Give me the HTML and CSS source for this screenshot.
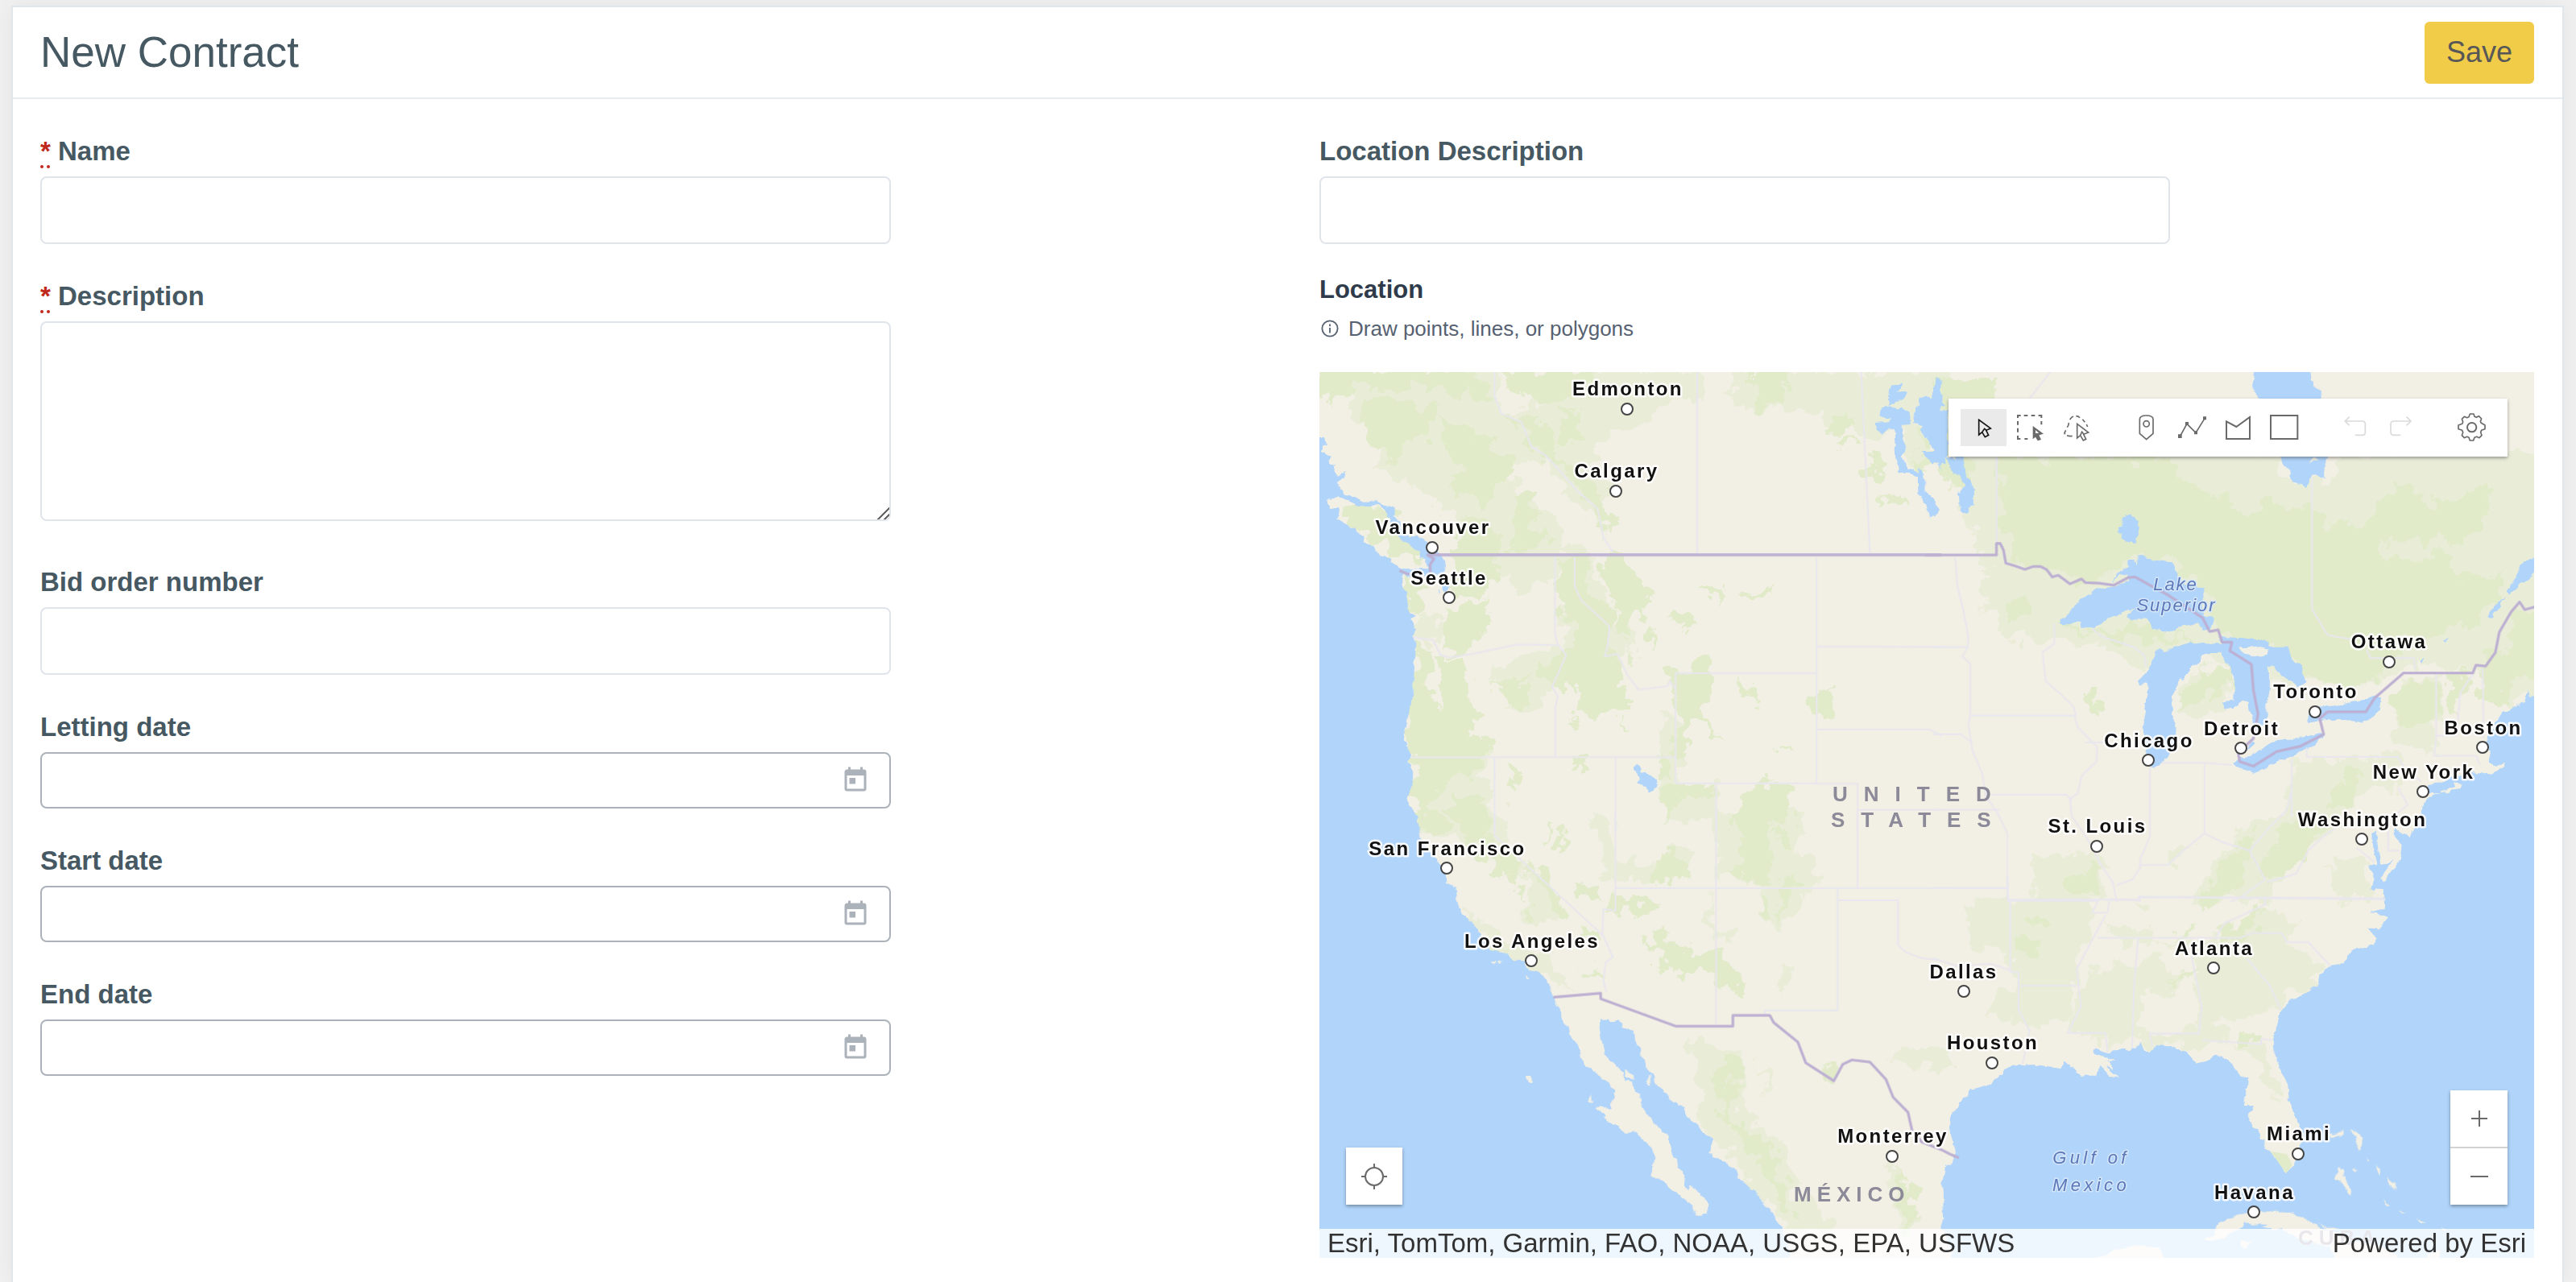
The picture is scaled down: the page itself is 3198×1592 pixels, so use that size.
FILE: index.html
```html
<!DOCTYPE html>
<html lang="en">
<head>
<meta charset="utf-8">
<title>New Contract</title>
<link rel="stylesheet" href="styles.css">
</head>
<body>
<svg class="defs" aria-hidden="true">
  <symbol id="calendar" viewBox="0 0 24 24"><path d="M19 3H18V1H16V3H8V1H6V3H5C3.890 3 3 3.900 3 5V19A2 2 0 0 0 5 21H19A2 2 0 0 0 21 19V5A2 2 0 0 0 19 3M19 19H5V8H19V19M7 10H12V15H7V10Z" fill="currentColor"/></symbol>
</svg>
<form class="card">
  <header class="card-header">
    <h1>New Contract</h1>
    <button class="save" type="submit">Save</button>
  </header>
  <div class="columns">
    <div class="column">
      <div class="field">
        <label for="name"><abbr title="required">*</abbr> Name</label>
        <input class="control" id="name" type="text">
      </div>
      <div class="field field-area">
        <label for="description"><abbr title="required">*</abbr> Description</label>
        <textarea class="control" id="description"></textarea>
      </div>
      <div class="field">
        <label for="bid">Bid order number</label>
        <input class="control" id="bid" type="text">
      </div>
      <div class="field">
        <label for="letting">Letting date</label>
        <div class="control date"><input id="letting" type="text"><button type="button" aria-label="Choose letting date"><svg><use href="#calendar"/></svg></button></div>
      </div>
      <div class="field">
        <label for="start">Start date</label>
        <div class="control date"><input id="start" type="text"><button type="button" aria-label="Choose start date"><svg><use href="#calendar"/></svg></button></div>
      </div>
      <div class="field">
        <label for="end">End date</label>
        <div class="control date"><input id="end" type="text"><button type="button" aria-label="Choose end date"><svg><use href="#calendar"/></svg></button></div>
      </div>
    </div>
    <div class="column">
      <div class="field field-location">
        <label for="location-description">Location Description</label>
        <input class="control" id="location-description" type="text">
      </div>
      <h2>Location</h2>
      <p class="hint"><svg viewBox="0 0 24 24"><circle cx="12" cy="12" r="10.500"/><path d="M12 11v7M12 6v3"/></svg>Draw points, lines, or polygons</p>
      <div class="map">
        <svg class="basemap" viewBox="0 0 1508 1100" preserveAspectRatio="xMidYMid slice">
          <defs>
            <filter id="rough" x="0" y="0" width="1508" height="1100" filterUnits="userSpaceOnUse"><feTurbulence type="fractalNoise" baseFrequency="0.045" numOctaves="4" seed="7"/><feDisplacementMap in="SourceGraphic" scale="42" xChannelSelector="R" yChannelSelector="G"/></filter>
            <filter id="shore" x="0" y="0" width="1508" height="1100" filterUnits="userSpaceOnUse"><feTurbulence type="fractalNoise" baseFrequency="0.090" numOctaves="3" seed="3"/><feDisplacementMap in="SourceGraphic" scale="7" xChannelSelector="R" yChannelSelector="G"/></filter>
          </defs>
          <rect class="land" width="1508" height="1100"/>

          <g class="wood-light" filter="url(#rough)">
            <g transform="translate(-8 -2) scale(.497 .357)">
              <path d="M0 0H460L470 150 560 180 620 300 500 320 520 440 600 470 620 620 560 700 440 720 330 480 230 380 150 330 200 230 100 160 80 60 0 60Z"/>
              <path d="M540 0H980L960 100 860 110 860 160 740 230 700 300 740 420 720 520 640 460 560 260 500 150 580 100Z"/>
              <path d="M1060 0H1600V180L1480 200 1380 230 1300 180 1200 130 1080 140 1040 60Z"/>
              <path d="M1480 200L1530 200 1560 330 1480 330Z"/>
              <path d="M480 520L700 640 760 880 800 860 790 990 620 960 620 700 500 760Z"/>
              <path d="M250 840L350 900 300 950 260 920Z M440 1050L560 960 640 980 560 1180 480 1180 510 1080 420 1090Z"/>
              <path d="M330 1240L450 1330 430 1420 480 1568H260V1330Z M870 1180L910 1240 930 1568 870 1500Z M900 1440H1010V1568H880Z"/>
            </g>
            <g transform="translate(762 98) scale(.485 .357)">
              <path d="M70 0H880L880 80 980 110 1050 0H1560V860L1440 860 1400 760 1260 740 1120 800 960 820 700 720 540 760 440 700 230 610 120 560 150 460 110 300 60 200Z"/>
              <path d="M100 420L300 420 340 600 250 680 180 620 130 520Z M620 850L700 740 770 800 740 900 660 930 620 920Z"/>
              <path d="M925 1070L1190 1060 1190 1160 1080 1200 1010 1330 900 1450 860 1568H660L780 1330 900 1260Z M1010 1420L1110 1420 1130 1568 1020 1520Z M250 1400L420 1400 440 1568H260Z M600 1370h50l-50 90z M1180 800L1300 790 1290 1060 1180 1000Z"/>
            </g>
            <g transform="translate(-8 548) scale(.497 .371)">
              <path d="M260 0H460L500 130 560 220 640 350 600 360 520 380 540 200 460 210 380 100 270 60Z M700 0H740L760 180 960 120 880 240 730 230Z M1000 0H1220L1210 120 1260 210 1190 360 1120 360 1110 230 1010 200Z"/>
              <path d="M360 290L480 430 600 500 640 600 560 530 440 470Z M1000 260L1010 380 1060 400 1030 450 980 380Z M1170 500l20 40-20 70-10-60z"/>
              <path d="M930 740L1060 790 1080 1000 1190 1120 1200 1280 1310 1360 1280 1400 1180 1400 1100 1240 1000 1080 960 960 970 860Z M1110 840l30 20 0 80z M1460 820L1500 770 1600 780V850H1460Z M1430 1170l30 20 50 200-30 10z"/>
            </g>
            <g transform="translate(762 628) scale(.509 .333)">
              <path d="M80 80L160 100 320 60 400 100 380 220 340 400 340 570 430 600 430 650 500 620 640 640 690 600 800 620 850 780 840 830 760 640 690 560 840 480 960 340 860 250 900 170 820 120 700 230 540 240 500 180 420 170 460 260 540 230 630 280 650 560 520 600 470 430 540 440 620 380 560 300 380 340 340 520 230 560 130 520 160 420 220 380 190 300 90 250Z"/>
              <path d="M420 340L500 400 500 590 400 570 350 480Z M650 240L780 250 840 400 780 380 700 350 650 330Z"/>
              <path d="M980 20h30l10 90-30-10z M0 640l20 20-20 40z M500 80h30v50l-20 10z"/>
            </g>
          </g>

          <g class="wood" filter="url(#rough)">
            <g transform="translate(-8 -2) scale(.497 .357)">
              <path d="M0 0H400L440 90 360 90 330 60 230 70 120 60 60 100 0 80Z M120 110L200 90 310 130 280 250 220 240 200 330 140 270Z"/>
              <path d="M320 150L360 170 470 280 510 340 420 480 330 370 370 350 330 280Z M460 0H700L680 90 580 110 500 80Z M610 120L670 150 680 240 620 250Z"/>
              <path d="M480 150L540 150 610 230 600 300 700 400 740 500 740 590 700 480 620 340 540 260Z"/>
              <path d="M60 470L180 480 220 540 280 650 190 650 140 580 80 520Z M500 440L550 420 560 560 600 590 500 640Z M370 510L450 540 470 650 440 790 340 770 360 640Z M220 700L300 760 240 850 230 760Z"/>
              <path d="M330 820L440 800 410 960 330 990Z M260 960H310L280 1100 320 1180 310 1000 380 1000 390 1130 420 1190 390 1260 440 1310 400 1400 240 1350 230 1250Z"/>
              <path d="M620 650L700 660 680 740 750 830 740 950 760 1000 790 1160 700 1220 650 1200 650 1100 570 1060 620 980 660 940 610 800Z"/>
              <path d="M720 650H780L830 750 840 850 770 920 750 800Z M900 840h40l20 40-50 10z M830 880l30 30-10 60z M960 775l50-25 10 45-20-15z M1060 790l90-40v40l-20-15-60 20z"/>
              <path d="M890 1040L990 1000 1000 1080 970 1200 1020 1290 980 1260 940 1200 930 1330 900 1330 910 1200Z M790 980l30 20-15 40z M1060 1050L1110 1090 1115 1150 1090 1140Z M1255 1110H1295V1170L1275 1210 1255 1180Z"/>
              <path d="M430 1100L540 1060 520 1170 480 1170 480 1110Z M570 1010l30 20 0 60-35-40z M630 1210l50 45-20 0z M770 1210l30 60-25-20z M1155 1290l40 20v30z M880 1320L895 1420 860 1415Z M650 1350h50l-45 50z M1135 1390l20 30-10 20z"/>
              <path d="M250 1350H430L420 1400 340 1420 280 1560 250 1530Z M340 1470L440 1500 450 1600H350Z M480 1390h25l10 60h-20z M890 1440H1000V1470L920 1490 890 1568 870 1500Z M1040 1540L1100 1440 1200 1440 1200 1568H1040Z"/>
              <path d="M1080 0h110l-20 120-50 10z M1290 190l50-50 10 60-30 30z M1300 250l70-10-40 40z M1370 340l40-40 20 50-20 40z M1405 430h60l20 40-70-20z"/>
            </g>
            <g transform="translate(762 98) scale(.485 .357)">
              <path d="M165 20H600L640 120 760 170 800 240 860 150 920 200 980 170 1020 270 1120 230 1200 100 1280 180 1400 130 1440 180 1380 300 1260 320 1140 300 1160 380 1300 360 1360 440 1460 430 1440 540 1380 600 1260 640 1200 640 1160 770 1060 820 960 800 880 680 740 650 700 480 620 380 530 360 460 400 440 450 360 450 270 400 200 370 180 300Z"/>
              <path d="M1560 560V800L1500 780 1440 900 1400 870 1400 740 1460 690 1500 560Z M1180 830L1240 780 1290 820 1290 940 1230 970 1180 900Z M1310 760h70l-30 110-20 60z"/>
              <path d="M190 500h50v70h-50z M310 600l40-15 60 40 140-30 30 30 90 30-110 10-120-20-110-50z M700 760l60-10 10 60-50 40-90 50-10-50 60-20z M390 830l30-10 20 70-30 20z"/>
              <path d="M1060 1120L1110 1110 1050 1250 1010 1260 1020 1190Z M920 1270L1000 1300 960 1420 860 1500 830 1470 880 1340Z M780 1360l50-30-30 130-60 100-50 0z M350 1470l70-20-20 118h-60z"/>
            </g>
            <g transform="translate(762 98) scale(.485 .357)"><path d="M-60 20h140l20 120-60-30z M-50 -60L120 -90 160 -70 150 10 -20 0Z M0 -240H170L120 -160 60 -100 0 -150Z"/></g>
            <g transform="translate(-8 548) scale(.497 .371)">
              <path d="M270 0H330L340 50 280 60Z M350 0H440L450 100 520 160 510 260 460 210 400 120Z M540 180L600 230 640 360 610 360 580 280Z M540 290l10 50-25 40z M660 230h45v70l-45-20z M590 40l20-10-30 80z M620 40l20 10-20 70-10-10z"/>
              <path d="M850 150L930 150 930 220 840 240Z M760 270L860 290 860 330 780 310 730 330Z M650 390l50-10 10 30-60 0z M660 520l60 10v30z M450 420l50 40-50 0z"/>
              <path d="M870 370L890 430 980 470 1070 530 1070 600 1030 580 980 520 900 550 850 470 820 430 860 430Z M1070 0H1140L1140 230 1030 200 1070 150Z M1120 300h20v50h-20z M1160 250l40-50 20 20-50 130z M1150 30l60 60-40 10z"/>
              <path d="M1020 800L1060 830 1060 930 1030 960 1050 1040 1110 1080 1170 1150 1170 1250 1210 1340 1170 1340 1110 1180 1040 1060 1000 960Z M1280 850l30 0 0 30-20 15z M1450 1170l30 60 30 80-20 90-20-120z"/>
            </g>
            <g transform="translate(762 628) scale(.509 .333)">
              <path d="M320 0h80l-40 70-30-20z M200 145l70-5 10 30-60 10z M190 220l70 0 10 40-50 20-30-10z M690 0h40l-20 70-50 30z M690 200L770 150 810 100 810 150 770 200 700 230Z M590 220l50-50-10 50z M580 390l60-70-20 50z M750 590l50-20-10 40-40 0z"/>
            </g>
          </g>

          <g class="water" filter="url(#shore)">
            <g transform="translate(-8 -2) scale(.497 .357)">
              <path d="M-40 235L30 235 34 262 24 268 22 282 30 290 46 296 40 320 52 330 50 345 62 370 82 350 78 372 62 385 66 404 80 430 105 440 125 456 160 455 172 462 150 470 120 472 100 465 60 440 34 448 46 482 62 478 66 495 58 518 72 522 92 548 106 548 110 565 128 578 126 600 150 608 165 645 180 650 198 655 194 666 220 690 290 690 300 715 240 720 222 700 222 758 232 775 240 840 256 853 246 862 252 885 258 895 250 925 256 930 256 990 250 1100 244 1170 228 1262 234 1300 244 1340 240 1365 250 1395 248 1450 234 1490 240 1510 256 1535 264 1580H-40Z"/>
              <path d="M160 462L190 470 203 480 200 500 204 515 220 520 222 550 240 580 262 580 290 600 322 640 330 680 325 710 300 705 286 690 282 660 268 655 266 630 215 585 195 540 188 500Z M322 745l12-10 8 20-14 18z M312 765l4 0-2 20z"/>
              <path d="M814 1372L820 1385 820 1400 832 1398 850 1420 862 1442 838 1472 832 1442 814 1440 818 1420 803 1395 803 1378Z"/>
              <path d="M1440 52L1475 50 1460 75 1483 72 1475 95 1455 110 1440 122 1436 100Z M1418 130L1440 122 1460 140 1470 128 1490 148 1495 188 1470 190 1478 240 1480 280 1470 300 1478 320 1485 345 1500 340 1515 360 1510 340 1525 350 1530 380 1530 420 1545 440 1565 490 1540 515 1533 470 1512 425 1510 370 1490 355 1465 360 1455 290 1452 210 1440 200 1420 225 1405 185 1440 180 1445 170 1415 160Z"/>
              <path d="M1515 92H1568L1568 350 1555 280 1520 210 1528 195 1500 185 1498 160 1508 140Z M1548 60l10-30 10 20v50z"/>
            </g>
            <g transform="translate(762 -2) scale(.4975 .3333)">
              <path d="M0 150L36 150 36 320H50L80 390 50 390 40 330 0 300Z M8 28L25 40 15 60 20 100 30 130H0V60Z M805 -20H938L948 60 962 65 968 80V160L985 330 970 385 972 392 895 390 870 330 812 100 798 60Z"/>
            </g>
            <g transform="translate(762 98) scale(.4847 .3571)">
              <path d="M55 10L75 10 85 90 103 130 103 185 85 212 68 210 66 150 80 120 62 70Z M-30 0H30L32 50 10 40 0 50Z M-20 165L0 175 18 210 0 230Z"/>
              <path d="M885 15L910 70 920 105 955 124 970 85 975 75 1003 100 998 70 1012 15Z"/>
              <path d="M487 228L500 222 520 232 528 262 522 318 512 322 505 315 485 310 482 290 472 285 474 268 485 265Z"/>
              <path d="M320 602L362 545 380 515 420 480 465 472 500 455 495 430 475 425 463 460 468 425 480 412 500 405 500 378 515 378 522 400 524 362 560 378 615 388 622 410 626 445 660 470 692 475 692 500 685 530 695 575 715 580 718 600 705 625 690 620 680 600 640 612 605 628 565 620 550 585 525 580 508 590 500 570 515 545 480 565 445 585 430 605 410 614 380 612 378 590 345 603Z"/>
              <path d="M660 665L735 680 770 690 775 710 740 700 700 700 685 708 682 735 660 745 645 780 640 800 628 790 625 830 610 850 615 880 612 930 622 960 622 1010 605 1060 580 1092 560 1100 545 1060 548 1020 536 960 545 880 552 840 545 800 530 820 528 800 555 745 580 685 590 700 620 678Z"/>
              <path d="M735 645L780 650 830 655 862 665 860 680 905 680 910 705 925 735 942 740 945 775 958 800 940 820 905 795 890 780 870 745 855 750 862 790 862 830 855 880 855 940 835 960 820 945 810 905 808 875 790 870 765 895 745 905 740 875 770 870 772 810 768 770 755 745 735 700 690 695 690 675 740 672Z M810 1015L822 1018 820 1030 800 1040Z"/>
              <path d="M768 1085L785 1065 820 1060 850 1025 880 1005 935 1000 990 980 1000 990 975 1025 940 1050 890 1075 855 1100 820 1122 800 1110 775 1100Z M958 945L965 915 990 890 1040 880 1095 870 1130 850 1145 860 1140 905 1120 930 1100 945 1060 935 1010 935Z"/>
              <path d="M1560 340L1505 400 1490 440 1470 490 1475 500 1500 470 1560 405Z M1465 505L1440 535 1418 572 1430 580 1450 540Z M1250 730l10-8-4 16z M1305 660l15-8-8 10z"/>
              <path d="M1600 850L1532 858 1522 830 1515 870 1495 880 1480 900 1460 905 1440 945 1425 985 1415 1010 1425 1060 1428 1088 1445 1095 1462 1085 1460 1100 1430 1125 1400 1118 1360 1120 1320 1140 1270 1165 1255 1190 1300 1190 1335 1170 1330 1152 1355 1155 1350 1168 1320 1187 1280 1195 1260 1210 1255 1225 1248 1270 1220 1345 1200 1330 1182 1308 1182 1340 1200 1370 1195 1420 1170 1470 1155 1500 1150 1480 1165 1440 1180 1425 1150 1440 1140 1395 1135 1320 1125 1330 1128 1400 1138 1440 1115 1440 1130 1490 1120 1525 1152 1530 1158 1600H1600Z"/>
            </g>
            <g transform="translate(-8 548) scale(.4974 .3712)">
              <path d="M258 0L268 80 272 100 305 150 320 180 334 205 334 235 364 265 358 285 365 320 420 410 440 455 480 465 500 490 530 495 532 515 570 540 590 575 603 615 622 680 636 715 640 740 655 765 668 800 675 838 712 870 750 925 754 955 738 985 705 982 730 1010 735 1035 765 1048 778 1070 800 1062 820 1090 845 1118 852 1145 845 1210 868 1230 948 1312 958 1352 982 1338 988 1308 962 1268 945 1242 938 1258 925 1245 927 1210 912 1185 908 1155 898 1150 890 1110 888 1080 865 1055 820 980 816 938 802 930 798 900 780 895 776 870 728 808 715 720 720 682 745 698 765 690 775 715 800 725 802 760 815 790 838 870 848 870 850 895 885 940 895 965 928 985 930 1015 960 1040 970 1068 998 1090 988 1140 1020 1160 1055 1195 1060 1215 1080 1240 1120 1290 1172 1390 1195 1485 1195 1600H-40V0Z"/>
            </g>
            <g transform="translate(762 628) scale(.5089 .3333)">
              <path d="M1120 0L1098 45 1102 85 1105 115 1068 130 1100 135 1108 150 1088 190 1058 188 1072 205 1080 225 1075 250 1040 260 1010 290 1000 322 965 330 945 360 938 395 910 430 880 452 865 455 858 485 845 510 838 555 828 580 832 640 840 690 865 770 868 830 895 930 905 960 895 1000 880 1075 860 1103 845 1060 810 1005 808 975 795 970 795 940 782 935 768 885 780 850 758 850 765 800 768 745 750 740 730 695 705 662 690 660 670 685 640 695 620 650 580 632 550 627 540 645 515 645 505 610 495 638 440 640 425 655 395 635 390 655 430 670 445 680 425 680 440 710 425 705 452 745 430 740 405 700 400 740 365 740 320 685 310 708 260 695 200 700 172 710 168 730 140 768 90 790 85 815 72 820 60 855 45 870 38 930 55 1020 45 1070 30 1070 22 1140 26 1270 20 1300 45 1400 48 1460H1540V0Z"/>
            </g>
          </g>

          <g class="isle" filter="url(#shore)">
            <path transform="translate(762 98) scale(.4847 .3571)" d="M780 685L830 680 858 690 855 710 820 715 800 705Z"/>
            <path transform="translate(762 -2) scale(.4975 .3333)" d="M938 338l12-15 12 15z"/>
            <g transform="translate(-8 548) scale(.4974 .3712)"><path d="M780 850L798 875 800 892 782 880Z M842 875V910L830 900Z M532 878h14v28h-10z M696 940l2 28-10-6z M530 542l10 10-6 4z M443 497l14-2-8 10z M460 497l16-4-10 8z"/></g>
            <g transform="translate(762 628) scale(.5089 .3333)"><path d="M660 1345L685 1330 690 1300 720 1265 760 1250 800 1242 840 1245 880 1250 910 1270 940 1305 985 1325 1010 1350 1075 1365 1130 1400 1140 1430H985L965 1370 900 1350 870 1320 800 1300 815 1290 760 1285 745 1310 700 1345 670 1355Z M400 1415L450 1385 510 1370 550 1375 570 1440H380Z M750 1350L775 1355 765 1382 750 1375Z M965 955L1000 945 1002 955 970 965Z M1015 935L1030 945 1048 965 1038 1020 1030 985 1035 965Z M988 1078L998 1085 1000 1110 1012 1135 1022 1190 1008 1170 995 1135 978 1125Z M1057 1043l8 10-4 4z M1080 1070L1092 1085 1088 1112 1084 1090Z M1105 1115L1125 1140 1132 1162 1120 1155Z M1095 1200l20 20-8 2z M1138 1235l12 18-8-4z M1180 1272L1200 1285 1190 1290Z M1235 1302l15 8-5 10z M1020 1083h12l-4 8z M1205 1400L1240 1390 1235 1430H1210Z M930 1285l30 15 30 5-20 8z"/></g>
          </g>
          <path class="everglades" d="M1181 968l20 3 7 14-8 10z"/>

          <g class="states">
            <g transform="translate(-8 -2) scale(.4974 .3571)"><path d="M453 0V90L470 150 520 180 545 265 580 295 610 340 660 420 710 480 725 580 750 635M959 0V635M1368 0L1390 635M604 650V915L610 950 632 990 597 1100 611 1135 605 1170V1343M653 650V750L670 800 740 890 735 960 728 995 760 985 785 1060 812 1110 885 1098 890 1080 905 1108M250 928L300 938 318 990 340 998 400 985 510 953 610 955M905 1435V1053H1257M1257 650V1436H905M1257 960L1568 962M1257 1248H1538L1568 1270M244 1345H905M453 1345V1600M755 1345V1600M1257 1437H1359V1600M1006 1437V1600M1359 1528H1568"/></g>
            <g transform="translate(762 -2) scale(.4975 .3333)"><path d="M295 0L240 105M158 320V400"/></g>
            <g transform="translate(762 98) scale(.4847 .3571)"><path d="M162 20V320M56 370L62 470 78 560 90 650 88 682 75 715 95 740V915L90 950 100 1040 125 1120 135 1200 165 1260 190 1330V1560M0 682H90M0 985L70 985 95 1010M95 920H362L370 960 420 1030 418 1080 380 1130 370 1190 350 1210 355 1270 400 1360 430 1440 460 1500 470 1568M310 600V670L280 700 288 800 330 850 360 890 365 920M405 615L430 645 510 680 540 710 545 750M150 1195H340L355 1215M390 1013H440M555 1100V1340L530 1420V1450L510 1490 470 1510M585 1085H695L765 1092M695 1088V1330L640 1390 600 1440 530 1440M695 1330L740 1360 810 1390 850 1490 790 1550 760 1568M918 1070V1180L905 1250 860 1310 810 1390M855 1500L930 1470 960 1390 1000 1340 1050 1290M918 1270V1180M957 1030V1064H1190L1205 1100 1250 1150M1190 1170L1215 1230 1190 1260M970 90V550L1010 640 1070 655M1110 690L1120 720H1230L1235 760M1288 775V1000L1283 1060H1390L1400 1090M1382 775L1350 840 1340 990H1290M1407 755L1410 1000M1085 1380L1130 1430M1165 1320V1390H1195M0 1248H170M0 1520H190M190 1560H525V1550L1150 1556"/></g>
            <g transform="translate(-8 548) scale(.4974 .3712)"><path d="M453 0V75L725 410 748 480 730 500 725 560 732 598M755 0V325L725 320 722 410M755 250H1600M1006 0V705M1359 0V250M1309 250V660H1128V675M1309 291H1460V440L1480 465 1520 485 1560 490"/></g>
            <g transform="translate(762 628) scale(.5089 .3333)"><path d="M182 0V86H402L388 130 425 130 430 80 505 85V72L820 76 1103 80M420 140L385 240 350 340 360 480 328 578H420L425 650M188 86V350L208 353V490L235 570 218 695M208 402H350M400 223H750L780 205 850 207 862 240H915L970 330M500 223L490 400 485 635M630 290L655 480 648 580H528L535 630M658 605L800 620V600L828 605M765 300L820 400 848 490M690 220L710 170 810 100V75M0 38H182M0 300L60 330 140 320 188 345"/></g>
          </g>

          <g id="border" class="border-halo">
            <path vector-effect="non-scaling-stroke" transform="translate(-8 -2) scale(.4974 .3571)" d="M1568 642H286L302 655 292 675 293 705M216 696L240 710"/>
            <path vector-effect="non-scaling-stroke" transform="translate(762 98) scale(.4847 .3571)" d="M-20 362H162V322L172 322 180 345 186 390 210 400 235 412 255 402 275 402 290 412 305 438 320 432 350 462 380 445 390 458 425 460 462 467 500 440 517 438 600 500 690 580 708 628 730 622 740 665 765 665 760 695 815 742 820 830 832 915 820 1000 800 1025 780 1040 785 1080 820 1096 880 1045 940 1027 1000 985 990 930 1010 907 1108 907 1130 860 1205 772 1382 772 1390 745 1415 748 1440 700 1450 630 1480 560 1502 525 1515 552 1560 535"/>
            <path vector-effect="non-scaling-stroke" transform="translate(-8 548) scale(.4974 .3712)" d="M600 615L718 602V620L905 712H1048V676H1140L1150 700 1210 765 1230 835 1300 895 1322 840 1345 825 1390 832 1430 890 1448 950 1485 1000 1495 1060 1520 1100 1568 1125 1590 1140 1612 1152"/>
          </g>
          <use href="#border" class="border-line"/>

          <g class="region">
            <text x="637" y="533">UNITED</text>
            <text x="635" y="565">STATES</text>
          </g>
          <text class="country" x="589" y="1030">MÉXICO</text>
          <text class="country" x="1215" y="1084">CUBA</text>
          <g class="lake">
            <text x="1063" y="271">Lake</text>
            <text x="1064" y="297">Superior</text>
          </g>
          <g class="gulf">
            <text x="958" y="983">Gulf of</text>
            <text x="958" y="1017">Mexico</text>
          </g>
          <g class="dots">
            <circle cx="382" cy="46" r="7"/><circle cx="368" cy="148" r="7"/><circle cx="140" cy="218" r="7"/><circle cx="161" cy="280" r="7"/>
            <circle cx="158" cy="616" r="7"/><circle cx="263" cy="731" r="7"/><circle cx="711" cy="974" r="7"/><circle cx="1328" cy="360" r="7"/>
            <circle cx="1236" cy="422" r="7"/><circle cx="1144" cy="467" r="7"/><circle cx="1029" cy="482" r="7"/><circle cx="1444" cy="466" r="7"/>
            <circle cx="1370" cy="521" r="7"/><circle cx="1294" cy="580" r="7"/><circle cx="965" cy="589" r="7"/><circle cx="1110" cy="740" r="7"/>
            <circle cx="800" cy="769" r="7"/><circle cx="835" cy="858" r="7"/><circle cx="1215" cy="971" r="7"/><circle cx="1160" cy="1043" r="7"/>
          </g>
          <g class="city">
            <text x="383" y="29">Edmonton</text><text x="369" y="131">Calgary</text><text x="141" y="201">Vancouver</text><text x="161" y="264">Seattle</text>
            <text x="159" y="600">San Francisco</text><text x="264" y="715">Los Angeles</text><text x="712" y="957">Monterrey</text><text x="1328" y="343">Ottawa</text>
            <text x="1237" y="405">Toronto</text><text x="1145" y="451">Detroit</text><text x="1030" y="466">Chicago</text><text x="1445" y="450">Boston</text>
            <text x="1371" y="505">New York</text><text x="1295" y="564">Washington</text><text x="966" y="572">St. Louis</text><text x="1111" y="724">Atlanta</text>
            <text x="800" y="753">Dallas</text><text x="836" y="841">Houston</text><text x="1216" y="954">Miami</text><text x="1161" y="1027">Havana</text>
          </g>
        </svg>

        <div class="toolbar">
          <div class="tools">
            <button type="button" class="selected" aria-label="Select"><svg viewBox="45 66 171 138"><path d="M113 106V162L125 152 136 170 149 163 140 145 157 138Z M126 151L134 139 142 145" stroke-width="5"/></svg></button>
            <button type="button" aria-label="Select by rectangle"><svg viewBox="216 66 171 138"><path d="M258 99V90H269M281 90H295M308 90H322M335 90H346V99M258 111V125M258 137V152M258 165V177H268M283 177H295M346 111V124" stroke-width="6"/><path class="solid" d="M314 129V178L324 170 332 184 345 180 337 163 354 158Z"/><path d="M324 144L337 156H324Z" fill="#fff" stroke="none"/></svg></button>
            <button type="button" aria-label="Select by lasso"><svg viewBox="387 66 171 138"><path d="M433 160Q431 152 437 145M442 134Q448 126 448 117M452 105Q458 95 465 93M475 92Q484 92 489 98M499 104L508 115M514 123L518 132M441 164Q450 168 461 166" stroke-width="5"/><path d="M479 121V174L491 164 502 183 512 178 503 160 521 153Z M491 163L497 151 504 160" stroke-width="5"/></svg></button>
          </div>
          <div class="tools">
            <button type="button" aria-label="Draw a point"><svg viewBox="654 66 171 138"><path d="M715 104Q715 90 740 90Q765 90 765 104V157L740 179 715 157Z" stroke-width="5"/><circle cx="740" cy="121" r="11" stroke-width="5"/></svg></button>
            <button type="button" aria-label="Draw a polyline"><svg viewBox="825 66 171 138"><path d="M866 166L891 121 924 154 957 101" stroke-width="5"/><path class="solid" d="M858 160h14v14h-14z M885 114h12v12h-12z M918 148h12v12h-12z M951 94h12v12h-12z"/></svg></button>
            <button type="button" aria-label="Draw a polygon"><svg viewBox="-54 66 171 138"><path d="M-12 112L25 132 75 96V177H-12Z" stroke-width="6"/></svg></button>
            <button type="button" aria-label="Draw a rectangle"><svg viewBox="117 66 171 138"><path d="M153 90H253V177H153Z" stroke-width="6"/></svg></button>
          </div>
          <div class="tools">
            <button type="button" disabled aria-label="Undo"><svg viewBox="381 66 171 138"><path d="M446 95L430 111 446 127M430 111H494Q505 111 505 122V153Q505 163 494 163H467" stroke-width="5"/></svg></button>
            <button type="button" disabled aria-label="Redo"><svg viewBox="552 66 171 138"><path d="M659 95L675 111 659 127M675 111H611Q600 111 600 122V153Q600 163 611 163H637" stroke-width="5"/></svg></button>
          </div>
          <div class="tools">
            <button type="button" aria-label="Settings"><svg viewBox="816 66 171 138"><path stroke-linejoin="round" stroke-width="5" d="M895 84H909L912 94 919 97 928 92 938 102 934 112 937 118 951 126V140L938 145 935 152 939 164 930 173 920 169 912 172 908 183H895L891 172 884 169 874 173 865 164 869 153 866 145 852 140V126L866 121 869 114 865 103 874 94 884 98 891 95Z"/><circle cx="902" cy="134" r="17" stroke-width="6"/></svg></button>
          </div>
        </div>

        <button type="button" class="locate" aria-label="Find my location"><svg viewBox="0 0 32 32"><circle cx="16" cy="16" r="11"/><path d="M16 0V5M16 27V32M0 16H5M27 16H32"/></svg></button>
        <div class="zoom">
          <button type="button" aria-label="Zoom in"><svg viewBox="0 0 32 32"><path d="M16 6V26M6 16H26"/></svg></button>
          <button type="button" aria-label="Zoom out"><svg viewBox="0 0 32 32"><path d="M5 16H27"/></svg></button>
        </div>
        <div class="attribution"><span>Esri, TomTom, Garmin, FAO, NOAA, USGS, EPA, USFWS</span><span>Powered by Esri</span></div>
      </div>
    </div>
  </div>
</form>
</body>
</html>
```
FILE: styles.css
```css
* { box-sizing: border-box; }
html { background: #f0f0f0; }
body {
  margin: 0;
  padding: 7px 15px 0 14px;
  background: #f0f0f0;
  color: #465862;
  font-family: "Liberation Sans", Arial, Helvetica, sans-serif;
}
.defs { position: absolute; width: 0; height: 0; }
button, input, textarea { font: inherit; color: inherit; }
button { padding: 0; border: 0; background: none; }
svg { display: block; }

.card {
  min-height: calc(100vh - 7px);
  border: 2px solid #dfe6ec;
  border-bottom: 0;
  background: #fff;
  box-shadow: 0 0 24px rgba(0, 0, 0, .05);
}
.card-header {
  display: flex;
  align-items: center;
  justify-content: space-between;
  height: 114px;
  padding: 0 35px 0 34px;
  border-bottom: 2px solid #e6ecf1;
}
h1 { margin: 0; font-size: 53px; font-weight: 400; line-height: 64px; }
.save {
  height: 77px;
  padding: 0 27px;
  border-radius: 6px;
  background: #f0cc49;
  color: #575757;
  font-size: 36px;
}

.columns {
  display: grid;
  grid-template-columns: 1fr 1fr;
  gap: 80px;
  padding: 46px 35px 30px 34px;
}
.field { margin-bottom: 46px; }
.field label {
  display: block;
  margin-bottom: 12px;
  font-size: 33px;
  font-weight: 700;
  line-height: 38px;
}
abbr {
  color: #c0281c;
  text-decoration: underline dotted 4px;
  text-underline-offset: 6px;
}
.control {
  display: block;
  width: 70%;
  height: 84px;
  padding: 0 20px;
  border: 2px solid #dfe5eb;
  border-radius: 8px;
  background: #fff;
  font-size: 32px;
}
textarea.control { height: 248px; padding: 16px 20px; resize: both; }
textarea::-webkit-resizer {
  background: linear-gradient(135deg, transparent 49%, #666 49%, #666 57%, transparent 57%, transparent 76%, #666 76%, #666 84%, transparent 84%);
}
.field-area { margin-bottom: 57px; }
.date {
  display: flex;
  align-items: center;
  height: 70px;
  padding: 0 24px 0 20px;
  border-color: #acb2b9;
}
.date input { flex: 1; min-width: 0; border: 0; outline: 0; background: none; }
.date svg { width: 36px; height: 36px; color: #acb2b9; }

.field-location { margin-bottom: 38px; }
h2 { margin: 0; color: #2f3b4a; font-size: 31px; font-weight: 700; line-height: 38px; }
.hint {
  display: flex;
  align-items: center;
  gap: 12px;
  margin: 13px 0 38px;
  padding-left: 2px;
  color: #566171;
  font-size: 26px;
  line-height: 32px;
}
.hint svg { width: 22px; height: 22px; fill: none; stroke: currentColor; stroke-width: 2; }

.map { position: relative; aspect-ratio: 1508 / 1100; overflow: hidden; }
.basemap { width: 100%; height: 100%; }
.land, .isle { fill: #f2efe4; }
.wood-light { fill: #e9edd8; }
.wood, .everglades { fill: #e1ebca; }
.water { fill: #b0d4fa; }
.states path { fill: none; stroke: #e8e6ee; stroke-width: 2px; vector-effect: non-scaling-stroke; }
.border-halo { fill: none; stroke: #bdb0d3; stroke-width: 3px; stroke-linejoin: round; }
.border-line { opacity: .4; }
.basemap text { paint-order: stroke; stroke-linejoin: round; }
.city { fill: #111; font-size: 24px; font-weight: 700; letter-spacing: .1em; text-anchor: middle; stroke: #fffd; stroke-width: 5px; }
.dots { fill: #fff; stroke: #444; stroke-width: 2px; }
.region, .country { fill: #8c8999; font-size: 26px; font-weight: 700; letter-spacing: 20px; }
.country { letter-spacing: 7px; }
.lake, .gulf { fill: #5b78b8; font-size: 22px; font-style: italic; letter-spacing: 2px; text-anchor: middle; stroke: #d6e6fa; stroke-width: 3px; }
.gulf { letter-spacing: .2em; }

.toolbar, .locate, .zoom { position: absolute; background: #fff; box-shadow: 0 2px 4px rgba(0, 0, 0, .35); }
.toolbar { top: 33px; right: 33px; display: flex; gap: 31px; height: 72px; padding: 13px 16px 13px 15px; }
.tools { display: flex; }
.tools button { width: 57px; height: 46px; color: #6a6a6a; }
.tools .selected { background: #eaeaea; color: #151515; }
.tools button:disabled { color: #dadada; }
.tools svg { width: 57px; height: 46px; fill: none; stroke: currentColor; }
.tools .solid { fill: currentColor; stroke: none; }
.locate { left: 33px; bottom: 66px; display: grid; place-items: center; width: 70px; height: 71px; }
.locate svg, .zoom svg { width: 32px; height: 32px; fill: none; stroke: #6a6a6a; stroke-width: 2; }
.zoom { right: 33px; bottom: 66px; width: 71px; }
.zoom button { display: grid; place-items: center; width: 100%; height: 70px; }
.zoom button + button { height: 72px; border-top: 2px solid #d2d2d2; }
.attribution {
  position: absolute;
  left: 0;
  right: 0;
  bottom: 0;
  display: flex;
  justify-content: space-between;
  padding: 0 10px;
  background: rgba(255, 255, 255, .8);
  color: #323232;
  font-size: 33px;
  line-height: 36px;
}
```
